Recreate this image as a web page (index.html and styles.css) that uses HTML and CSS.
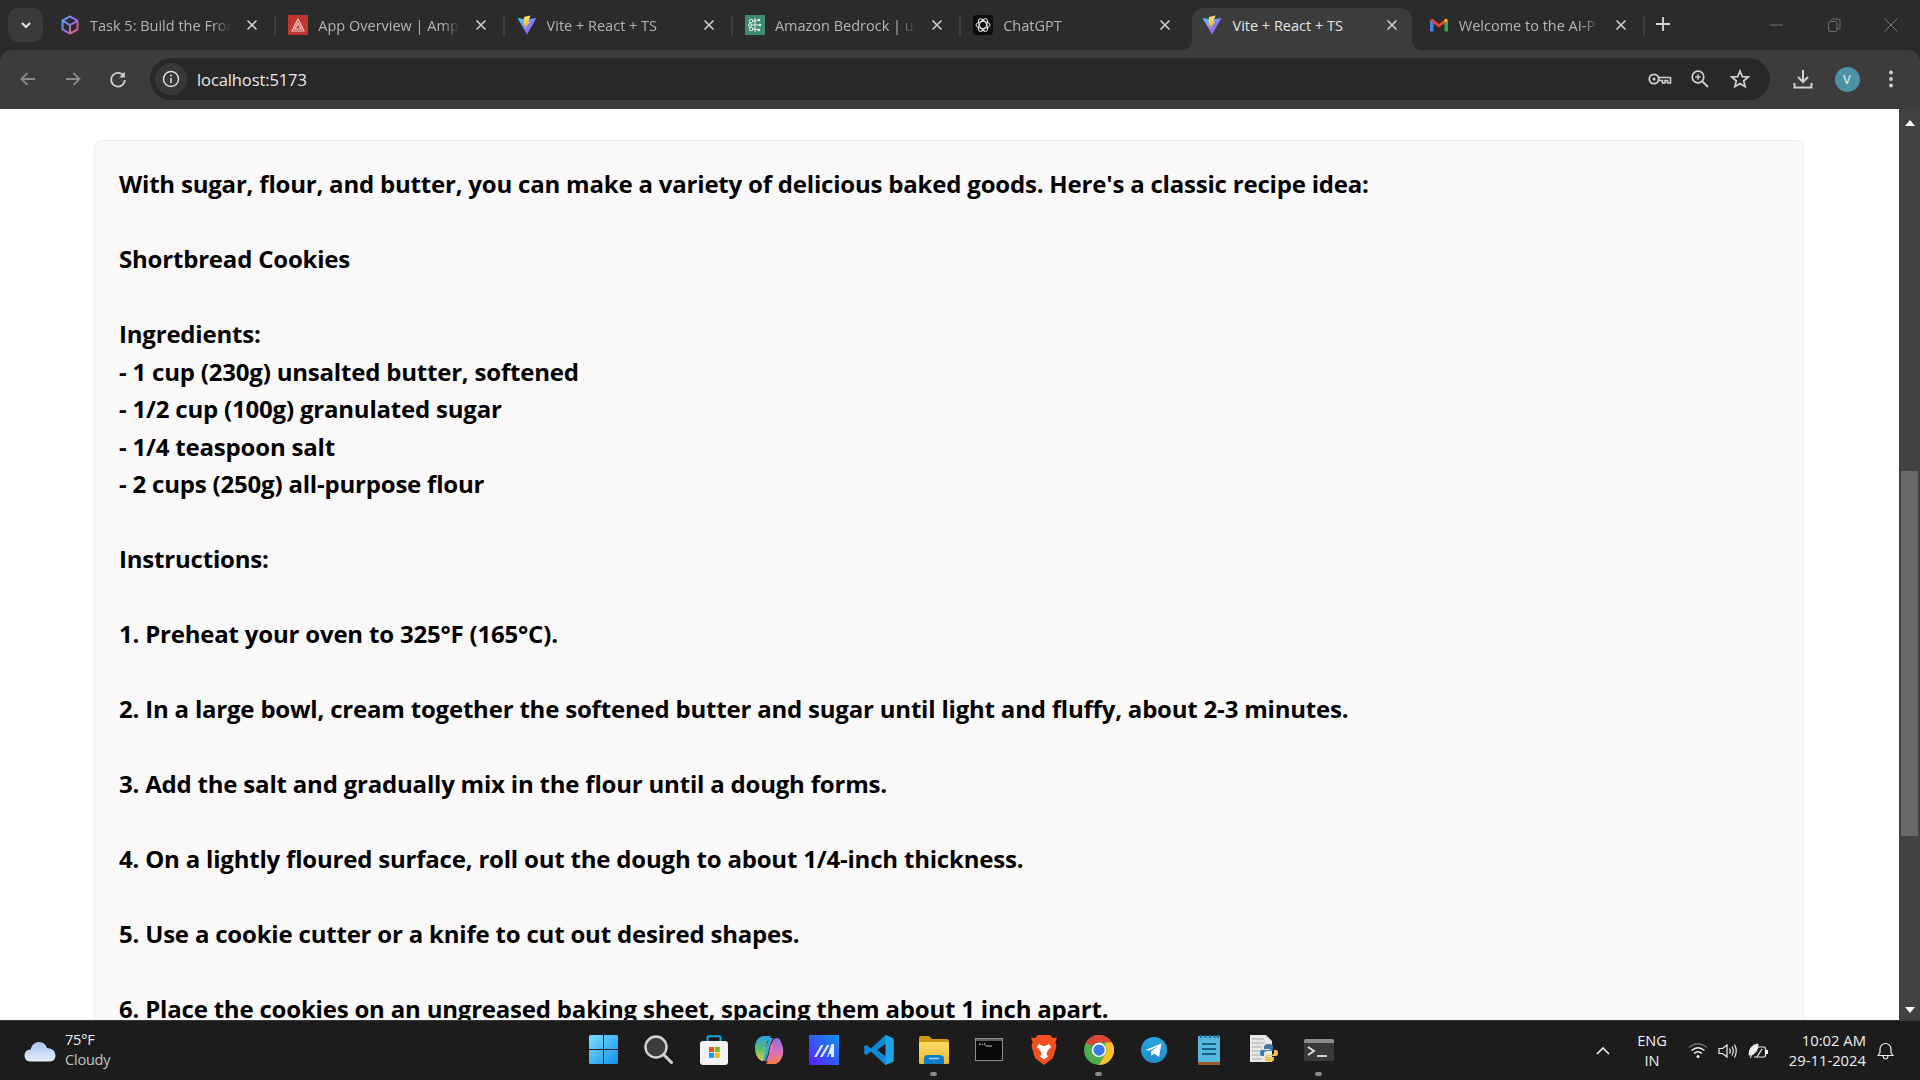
FILE: index.html
```html
<!DOCTYPE html>
<html lang="en">
<head>
<meta charset="utf-8">
<title>Vite + React + TS</title>
<link rel="stylesheet" href="styles.css">
</head>
<body>
<svg class="defs" width="0" height="0" aria-hidden="true">
  <defs>
    <linearGradient id="viteA" x1="0" y1="0" x2="1" y2="1"><stop offset="0" stop-color="#41d1ff"/><stop offset="1" stop-color="#bd34fe"/></linearGradient>
    <linearGradient id="viteB" x1="0" y1="0" x2="0" y2="1"><stop offset="0" stop-color="#ffea83"/><stop offset="1" stop-color="#ffa800"/></linearGradient>
    <linearGradient id="cube" x1="0" y1="0" x2="1" y2="1"><stop offset="0" stop-color="#45b4f5"/><stop offset=".5" stop-color="#9a6af0"/><stop offset="1" stop-color="#f0605a"/></linearGradient>
    <linearGradient id="win" x1="0" y1="0" x2="1" y2="1"><stop offset="0" stop-color="#7fdcfb"/><stop offset="1" stop-color="#0f93ee"/></linearGradient>
    <linearGradient id="ma" x1="1" y1="0" x2="0" y2="1"><stop offset="0" stop-color="#0c96ee"/><stop offset="1" stop-color="#5a1dfb"/></linearGradient>
    <linearGradient id="cp1" x1="0" y1="0" x2="0" y2="1"><stop offset="0" stop-color="#2a9fe8"/><stop offset=".55" stop-color="#5ec26a"/><stop offset="1" stop-color="#f5c33b"/></linearGradient>
    <linearGradient id="cp2" x1="0" y1="0" x2="0" y2="1"><stop offset="0" stop-color="#8f6be8"/><stop offset=".55" stop-color="#d96fc0"/><stop offset="1" stop-color="#f9803f"/></linearGradient>
    <linearGradient id="cloud" x1="0" y1="0" x2="0" y2="1"><stop offset="0" stop-color="#a9c6f5"/><stop offset="1" stop-color="#e2ecfb"/></linearGradient>
    <linearGradient id="tg" x1="0" y1="0" x2="0" y2="1"><stop offset="0" stop-color="#2aa6e0"/><stop offset="1" stop-color="#1d8ccb"/></linearGradient>
    <linearGradient id="fold" x1="0" y1="0" x2="0" y2="1"><stop offset="0" stop-color="#fcdc6a"/><stop offset="1" stop-color="#f1b92c"/></linearGradient>
    <symbol id="vite" viewBox="0 0 20 20">
      <path d="M.5 3 9.6 4.6 19.5 3 10 19.5z" fill="url(#viteA)"/>
      <path d="M13.6.6 7 2l-.5 8.5 2-.4-.5 3.6 5.2-7.2-2.2.4z" fill="url(#viteB)"/>
    </symbol>
    <symbol id="x" viewBox="0 0 12 12">
      <path d="M1.5 1.5 10.5 10.5M10.5 1.5 1.5 10.5" fill="none" stroke="currentColor" stroke-width="1.6"/>
    </symbol>
  </defs>
</svg>

<div class="window">
  <header class="tabstrip">
    <button class="tabmenu" type="button" aria-label="Search tabs">
      <svg width="12" height="12" viewBox="0 0 12 12"><path d="M2 4 6 8 10 4" fill="none" stroke="#e6e6e6" stroke-width="2"/></svg>
    </button>

    <div class="tab">
      <svg class="fav" width="20" height="20" viewBox="0 0 20 20"><path d="M10 1.5 17.5 5.7V14.3L10 18.5 2.500 14.3V5.700ZM2.800 5.900 10 10 17.200 5.900M10 10V18" fill="none" stroke="url(#cube)" stroke-width="2"/></svg>
      <span class="title">Task 5: Build the Fron</span>
      <svg class="close" width="12" height="12"><use href="#x"/></svg>
    </div>
    <div class="tab">
      <svg class="fav" width="20" height="20" viewBox="0 0 20 20"><rect width="20" height="20" fill="#c4352f"/><path d="M10 4 16 16H4ZM10 8 13 14H7Z" fill="none" stroke="#f5c9c5" stroke-width="1.200"/></svg>
      <span class="title">App Overview | Ampl</span>
      <svg class="close" width="12" height="12"><use href="#x"/></svg>
    </div>
    <div class="tab">
      <svg class="fav" width="20" height="20"><use href="#vite"/></svg>
      <span class="title">Vite + React + TS</span>
      <svg class="close" width="12" height="12"><use href="#x"/></svg>
    </div>
    <div class="tab">
      <svg class="fav" width="20" height="20" viewBox="0 0 20 20"><rect width="20" height="20" fill="#3f8a72"/><path d="M10 3V17M10 6H7M10 10H6M10 14H7M10 6.500 13.500 5M10 10H14M10 14 13.500 15" fill="none" stroke="#e4f2ec" stroke-width="1"/><circle cx="6" cy="6" r="1.800" fill="none" stroke="#e4f2ec"/><circle cx="5" cy="10" r="1.500" fill="none" stroke="#e4f2ec"/><circle cx="6" cy="14" r="1.800" fill="none" stroke="#e4f2ec"/><circle cx="15" cy="10" r="1.300" fill="#e4f2ec"/><circle cx="14" cy="5" r="1.300" fill="#e4f2ec"/><circle cx="14" cy="15" r="1.300" fill="#e4f2ec"/></svg>
      <span class="title">Amazon Bedrock | us</span>
      <svg class="close" width="12" height="12"><use href="#x"/></svg>
    </div>
    <div class="tab tab-nosep">
      <svg class="fav" width="20" height="20" viewBox="0 0 20 20"><rect width="20" height="20" rx="4" fill="#0b0b0b"/><g fill="none" stroke="#e8e8e8" stroke-width="1"><ellipse cx="10" cy="10" rx="7" ry="3.500"/><ellipse cx="10" cy="10" rx="7" ry="3.500" transform="rotate(60 10 10)"/><ellipse cx="10" cy="10" rx="7" ry="3.500" transform="rotate(120 10 10)"/></g></svg>
      <span class="title">ChatGPT</span>
      <svg class="close" width="12" height="12"><use href="#x"/></svg>
    </div>
    <div class="tab tab-active">
      <svg class="fav" width="20" height="20"><use href="#vite"/></svg>
      <span class="title">Vite + React + TS</span>
      <svg class="close" width="12" height="12"><use href="#x"/></svg>
    </div>
    <div class="tab">
      <svg class="fav" width="20" height="20" viewBox="0 0 20 20"><path d="M1 5V16.500H4.500V8Z" fill="#4285f4"/><path d="M19 5V16.500H15.500V8Z" fill="#34a853"/><path d="M1 5.500 3 3.500 10 9 17 3.500 19 5.500 10 12.500Z" fill="#ea4335"/><path d="M15.500 8 19 5.500 17 3.500 15.500 4.700Z" fill="#fbbc04"/></svg>
      <span class="title">Welcome to the AI-P</span>
      <svg class="close" width="12" height="12"><use href="#x"/></svg>
    </div>

    <button class="newtab" type="button" aria-label="New tab">
      <svg width="14" height="14" viewBox="0 0 14 14"><path d="M7 0V14M0 7H14" stroke="#d6d6d6" stroke-width="1.800"/></svg>
    </button>

    <div class="winctrls">
      <svg width="14" height="14" viewBox="0 0 14 14"><path d="M1 7H14" stroke="#6e6e6e" stroke-width="1"/></svg>
      <svg width="14" height="14" viewBox="0 0 14 14"><rect x="1.500" y="3.500" width="8.500" height="10" rx="1.500" fill="none" stroke="#6e6e6e"/><path d="M4 3.500V2.500Q4 1 5.500 1H11Q13 1 13 3V9.500Q13 11 11 11H10" fill="none" stroke="#6e6e6e"/></svg>
      <svg width="14" height="14" viewBox="0 0 14 14"><path d="M.5 .5 13.500 13.500M13.500 .5 .5 13.500" stroke="#7a7a7a" stroke-width="1"/></svg>
    </div>
  </header>

  <nav class="toolbar">
    <div class="navbtns">
      <svg width="18" height="18" viewBox="0 0 18 18"><path d="M16 9H2.500M8.500 3 2.500 9 8.500 15" fill="none" stroke="#8a8a8a" stroke-width="1.800"/></svg>
      <svg width="18" height="18" viewBox="0 0 18 18"><path d="M2 9H15.500M9.500 3 15.500 9 9.500 15" fill="none" stroke="#8a8a8a" stroke-width="1.800"/></svg>
      <svg width="18" height="18" viewBox="0 0 18 18"><path d="M15 6.500A6.800 6.800 0 1 0 15.800 10" fill="none" stroke="#cfcfcf" stroke-width="1.800"/><path d="M15.800 1.800V7.400H10.200Z" fill="#cfcfcf"/></svg>
    </div>
    <div class="omnibox">
      <span class="infochip">
        <svg width="18" height="18" viewBox="0 0 18 18"><circle cx="9" cy="9" r="7.500" fill="none" stroke="#dcdcdc" stroke-width="1.500"/><path d="M9 8V13" stroke="#dcdcdc" stroke-width="1.600"/><circle cx="9" cy="5.500" r="1" fill="#dcdcdc"/></svg>
      </span>
      <span class="url">localhost:5173</span>
      <span class="omni-actions">
        <svg class="keyicon" width="24" height="14" viewBox="0 0 24 14"><circle cx="6" cy="7" r="4.700" fill="none" stroke="#d0d0d0" stroke-width="1.800"/><circle cx="6" cy="7" r="1.500" fill="#d0d0d0"/><path d="M10.500 5.500H22.500V11H19.500V8.500H17V11H14.500V8.500H10.500" fill="none" stroke="#d0d0d0" stroke-width="1.600"/></svg>
        <svg width="20" height="20" viewBox="0 0 20 20"><circle cx="8" cy="8" r="5.800" fill="none" stroke="#d0d0d0" stroke-width="1.700"/><path d="M12.300 12.300 18 18" stroke="#d0d0d0" stroke-width="1.800"/><path d="M8 5.300V10.700M5.300 8H10.700" stroke="#d0d0d0" stroke-width="1.500"/></svg>
        <svg width="20" height="20" viewBox="0 0 20 20"><path d="M10 2 12.300 7.600 18.300 8 13.700 11.900 15.200 17.800 10 14.600 4.800 17.800 6.300 11.900 1.700 8 7.700 7.600Z" fill="none" stroke="#d0d0d0" stroke-width="1.700"/></svg>
      </span>
    </div>
    <div class="tool-actions">
      <svg width="20" height="20" viewBox="0 0 20 20"><path d="M10 1V12.500M5 8 10 13 15 8" fill="none" stroke="#d0d0d0" stroke-width="2"/><path d="M1.500 14V18.500H18.500V14" fill="none" stroke="#d0d0d0" stroke-width="2"/></svg>
      <span class="avatar">V</span>
      <svg width="4" height="18" viewBox="0 0 4 18"><circle cx="2" cy="2.500" r="1.900" fill="#d0d0d0"/><circle cx="2" cy="9" r="1.900" fill="#d0d0d0"/><circle cx="2" cy="15.500" r="1.900" fill="#d0d0d0"/></svg>
    </div>
  </nav>

  <main class="viewport">
    <div class="page">
      <article class="card">
        <p class="line">With sugar, flour, and butter, you can make a variety of delicious baked goods. Here's a classic recipe idea:</p>
        <p class="line blank"></p>
        <p class="line">Shortbread Cookies</p>
        <p class="line blank"></p>
        <p class="line">Ingredients:</p>
        <p class="line">- 1 cup (230g) unsalted butter, softened</p>
        <p class="line">- 1/2 cup (100g) granulated sugar</p>
        <p class="line">- 1/4 teaspoon salt</p>
        <p class="line">- 2 cups (250g) all-purpose flour</p>
        <p class="line blank"></p>
        <p class="line">Instructions:</p>
        <p class="line blank"></p>
        <p class="line">1. Preheat your oven to 325°F (165°C).</p>
        <p class="line blank"></p>
        <p class="line">2. In a large bowl, cream together the softened butter and sugar until light and fluffy, about 2-3 minutes.</p>
        <p class="line blank"></p>
        <p class="line">3. Add the salt and gradually mix in the flour until a dough forms.</p>
        <p class="line blank"></p>
        <p class="line">4. On a lightly floured surface, roll out the dough to about 1/4-inch thickness.</p>
        <p class="line blank"></p>
        <p class="line">5. Use a cookie cutter or a knife to cut out desired shapes.</p>
        <p class="line blank"></p>
        <p class="line">6. Place the cookies on an ungreased baking sheet, spacing them about 1 inch apart.</p>
      </article>
    </div>
    <div class="scrollbar">
      <svg width="10" height="6" viewBox="0 0 10 6"><path d="M5 0 10 6H0Z" fill="#fff"/></svg>
      <div class="track"><div class="thumb"></div></div>
      <svg width="10" height="6" viewBox="0 0 10 6"><path d="M0 0H10L5 6Z" fill="#fff"/></svg>
    </div>
  </main>

  <footer class="taskbar">
    <div class="weather">
      <svg width="32" height="22" viewBox="0 0 32 22"><path d="M7 21.500Q.5 21.500 .5 15.500 .5 10 6.500 9.500 8.500 2 15 2 21 2 23 8 31.500 8.500 31.500 15.500 31.500 21.500 25 21.500Z" fill="url(#cloud)"/></svg>
      <div class="weather-text"><span class="temp">75°F</span><span class="cond">Cloudy</span></div>
    </div>

    <div class="apps">
      <span class="app"><svg width="29" height="29" viewBox="0 0 29 29"><path d="M0 1.500Q0 0 1.500 0H14V14H0ZM15 0H27.500Q29 0 29 1.500V14H15ZM0 15H14V29H1.500Q0 29 0 27.500ZM15 15H29V27.500Q29 29 27.500 29H15Z" fill="url(#win)"/></svg></span>
      <span class="app"><svg width="29" height="29" viewBox="0 0 29 29"><circle cx="12" cy="12" r="10.500" fill="#3c3c3c" stroke="#d2d2d2" stroke-width="2.400"/><path d="M20 20 27.500 27.500" stroke="#d2d2d2" stroke-width="3" stroke-linecap="round"/></svg></span>
      <span class="app"><svg width="30" height="30" viewBox="0 0 30 30"><path d="M8.500 7V3Q8.500 1.200 10 1.200H20Q21.500 1.200 21.500 3V7" fill="none" stroke="#1ba2e8" stroke-width="2"/><rect x="1" y="6" width="28" height="24" rx="3" fill="#f2f2f2"/><rect x="10" y="12" width="5" height="5" fill="#f25022"/><rect x="15.800" y="12" width="5" height="5" fill="#7fba00"/><rect x="10" y="17.800" width="5" height="5" fill="#00a4ef"/><rect x="15.800" y="17.800" width="5" height="5" fill="#ffb900"/></svg></span>
      <span class="app"><svg width="30" height="30" viewBox="0 0 30 30"><path d="M9 1H17L13 7 11 22Q10 28 6 25 1 21 1 13 1 3 9 1Z" fill="url(#cp1)"/><path d="M20 4Q25 1 27 7 30 13 29 19 27 28 21 29H12L16 24 18 8Q18.500 5 20 4Z" fill="url(#cp2)"/><path d="M15 3H19L16 10 14 19 11 27 9.500 24 12 12Z" fill="#3aa3d8"/><path d="M16.500 10 20 6 18.500 17 15.500 26 12 27 14.500 20Z" fill="#e9739f"/></svg></span>
      <span class="app"><svg width="30" height="30" viewBox="0 0 30 30"><rect width="30" height="30" fill="url(#ma)"/><path d="M5 22 12 10H14.500L7.500 22ZM11 22 18 10H20.500L13.500 22ZM18 22 22.500 9H25V22H22V19H20L19 22Z" fill="#e8ecff"/></svg></span>
      <span class="app"><svg width="30" height="30" viewBox="0 0 30 30"><path d="M21.500 0 29.500 3.500V26.500L21.500 30 7 16.500 2.500 20 .2 18.800V11.200L2.500 10 7 13.500ZM22 8.500 13 15 22 21.500Z" fill="#0e8ad8"/><path d="M21.500 0 29.500 3.500V26.500L21.500 30Z" fill="#1ea4ea"/></svg></span>
      <span class="app">
        <svg width="30" height="28" viewBox="0 0 30 28"><path d="M0 2Q0 0 2 0H10L13 3H28Q30 3 30 5V8H0Z" fill="#d29a14"/><rect y="6" width="30" height="22" rx="1.500" fill="url(#fold)"/><path d="M5 28V23Q5 19 9 19H21Q25 19 25 23V28Z" fill="#0f7fcc"/><path d="M10 22.500H20" stroke="#9fd3f5" stroke-width="1.500"/></svg>
        <i class="running"></i>
      </span>
      <span class="app"><svg width="28" height="23" viewBox="0 0 28 23"><rect x=".5" y=".5" width="27" height="22" fill="#0a0a0a" stroke="#8c8c8c"/><rect x="1" y="1" width="26" height="2" fill="#5c5c5c"/><path d="M4 6H6M7 6.500H8M9 5 10.500 7.500M11 8H17" stroke="#cfcfcf"/></svg></span>
      <span class="app"><svg width="26" height="30" viewBox="0 0 26 30"><path d="M7 0H19L22 3 26 2.500 24.500 7 25.500 11 22 23 17 27 13 30 9 27 4 23 .5 11 1.500 7 0 2.500 4 3Z" fill="#f1511e"/><path d="M8 9 12 11H14L18 9 20 12 16.500 16 15.500 19 17 21.500 13 24.500 9 21.500 10.500 19 9.500 16 6 12Z" fill="#fff"/></svg></span>
      <span class="app">
        <svg width="30" height="30" viewBox="0 0 48 48"><circle cx="24" cy="24" r="24" fill="#4caf50"/><path d="M24 0A24 24 0 0 1 44.800 12H24A12 12 0 0 0 13.600 18L3.200 12A24 24 0 0 1 24 0Z" fill="#db4437"/><path d="M44.800 12A24 24 0 0 1 24 48L34.400 30A12 12 0 0 0 34.400 18L34.400 12Z" fill="#fbc02d"/><circle cx="24" cy="24" r="11.500" fill="#fff"/><circle cx="24" cy="24" r="9" fill="#3b78e7"/></svg>
        <i class="running"></i>
      </span>
      <span class="app"><svg width="26" height="26" viewBox="0 0 26 26"><circle cx="13" cy="13" r="13" fill="url(#tg)"/><path d="M4.500 13 20.500 6.500 18 20 13 16.500 10.500 19 10 14.500 17.500 9 8 13.800Z" fill="#fff"/></svg></span>
      <span class="app"><svg width="22" height="30" viewBox="0 0 22 30"><rect y="1" width="22" height="28" fill="#56b8de"/><rect y="27" width="22" height="3" fill="#9a5a2a"/><path d="M3 0V3M7.500 0V3M12 0V3M16.500 0V3M20 0V3" stroke="#1d6f93" stroke-width="2"/><path d="M4 9H18M4 14H18M4 19H18" stroke="#17607f" stroke-width="2"/></svg></span>
      <span class="app"><svg width="28" height="29" viewBox="0 0 28 29"><path d="M0 0H16L22 6V27H0Z" fill="#e8e8e8"/><path d="M2 4H14M2 8H14M2 12H12M2 16H12M2 20H12M2 24H12" stroke="#a8a8a8"/><path d="M19 9Q14 9 14 12V14H20V15H12Q10 15 10 18 10 21 12 21H14V19Q14 16 17 16H21Q23 16 23 14V12Q23 9 19 9Z" fill="#3f79ab"/><path d="M19 27Q24 27 24 24V22H18V21H26Q28 21 28 18 28 15 26 15H24V17Q24 20 21 20H17Q15 20 15 22V24Q15 27 19 27Z" fill="#f2c94c"/></svg></span>
      <span class="app">
        <svg width="30" height="22" viewBox="0 0 30 22"><rect width="30" height="22" rx="2" fill="#3a3a3a"/><path d="M0 2Q0 0 2 0H28Q30 0 30 2V4H0Z" fill="#8c8c8c"/><path d="M4 8 10 12 4 16" fill="none" stroke="#e6e6e6" stroke-width="1.800"/><path d="M13 17H23" stroke="#e6e6e6" stroke-width="1.800"/></svg>
        <i class="running"></i>
      </span>
    </div>

    <div class="tray">
      <svg width="14" height="8" viewBox="0 0 14 8"><path d="M1 7 7 1 13 7" fill="none" stroke="#f0f0f0" stroke-width="1.600"/></svg>
      <div class="lang"><span>ENG</span><span>IN</span></div>
      <div class="status">
        <svg width="20" height="18" viewBox="0 0 20 18"><path d="M1 5.500Q10 -2 19 5.500" fill="none" stroke="#6a6a6a" stroke-width="1.300"/><path d="M3.500 8.500Q10 3 16.500 8.500M6 11.500Q10 8 14 11.500" fill="none" stroke="#f0f0f0" stroke-width="1.300"/><circle cx="10" cy="14.500" r="1.500" fill="#f0f0f0"/></svg>
        <svg width="20" height="18" viewBox="0 0 20 18"><path d="M1 6.500H4.500L9 3V15L4.500 11.500H1Z" fill="none" stroke="#f0f0f0" stroke-width="1.200"/><path d="M11.500 6.500Q13 9 11.500 11.500M14 4.500Q16.500 9 14 13.500M16.500 2.500Q20 9 16.500 15.500" fill="none" stroke="#f0f0f0" stroke-width="1.200"/></svg>
        <svg width="20" height="18" viewBox="0 0 20 18"><path d="M8 5H16Q17.500 5 17.500 6.500V13.500Q17.500 15 16 15H6" fill="none" stroke="#f0f0f0" stroke-width="1.200"/><path d="M1 13Q1 3 10 2 10 11 3 13ZM2 16 7 8" fill="#f0f0f0" stroke="#f0f0f0"/><path d="M9 15 14 7" stroke="#f0f0f0" stroke-width="1.200"/><rect x="18" y="8" width="2" height="4" fill="#f0f0f0"/></svg>
      </div>
      <div class="clock"><span>10:02 AM</span><span>29-11-2024</span></div>
      <svg class="bell" width="17" height="18" viewBox="0 0 17 18"><path d="M1 13.500H16L14 10.500V7A5.500 5.500 0 0 0 3 7V10.500ZM6 14Q6.500 17 8.500 17 10.500 17 11 14" fill="none" stroke="#f0f0f0" stroke-width="1.200"/></svg>
    </div>
  </footer>
</div>
</body>
</html>
```

FILE: styles.css
```css
* { box-sizing: border-box; }
html, body { margin: 0; height: 100%; overflow: hidden; }
body { font-family: "Open Sans", "Noto Sans", sans-serif; background: #fff; }
p { margin: 0; }
button { border: 0; padding: 0; background: none; font: inherit; }
svg { display: block; flex: none; }
.defs { position: absolute; }

.window { display: flex; flex-direction: column; height: 100vh; background: #2b2b2b; }

/* tab strip */
.tabstrip { height: 50px; flex: none; display: flex; align-items: flex-end; padding-left: 8px; background: #2b2b2b; color: #b4b4b4; }
.tabmenu { width: 35px; height: 34px; margin-bottom: 8px; margin-right: 2px; border-radius: 10px; background: #3a3a3a; display: flex; align-items: center; justify-content: center; flex: none; }
.tab { position: relative; width: 228.300px; height: 42px; flex: none; display: flex; align-items: center; padding: 0 15px 8px 15px; font-size: 14.500px; }
.tab::after { content: ""; position: absolute; right: -3px; top: 8px; width: 2px; height: 20px; background: #3d3d3d; }
.tab-nosep::after { display: none; }
.fav { margin-right: 10px; }
.title { flex: 1; min-width: 0; white-space: nowrap; overflow: hidden; -webkit-mask-image: linear-gradient(to right, #000 84%, transparent 96%); mask-image: linear-gradient(to right, #000 84%, transparent 96%); }
.close { margin-left: 9px; color: #cfcfcf; }
.tab-active { background: #3c3c3c; color: #e4e4e4; margin: 0 6px; width: 219.300px; border-radius: 12px 12px 0 0; padding-left: 10px; padding-right: 14px; }
.tab-active .title { -webkit-mask-image: none; mask-image: none; }
.tab-active::before, .tab-active::after { content: ""; position: absolute; bottom: 0; top: auto; width: 10px; height: 10px; }
.tab-active::before { left: -10px; background: radial-gradient(circle at 0 0, transparent 10px, #3c3c3c 10.500px); }
.tab-active::after { right: -10px; background: radial-gradient(circle at 100% 0, transparent 10px, #3c3c3c 10.500px); }
.tab-active + .tab { margin-left: -4px; }
.newtab { width: 16px; height: 16px; margin: 0 0 18px 12.500px; display: flex; align-items: center; justify-content: center; flex: none; }
.winctrls { margin-left: auto; display: flex; gap: 43.500px; padding-right: 22px; margin-bottom: 18px; }

/* toolbar */
.toolbar { height: 59px; flex: none; display: flex; align-items: center; padding: 0 0 1px 19px; background: #3c3c3c; border-radius: 12px 12px 0 0; }
.navbtns { display: flex; gap: 27px; width: 131px; }
.omnibox { width: 1620px; height: 42px; flex: none; display: flex; align-items: center; padding: 0 20px 0 5px; border-radius: 21px; background: #282828; }
.infochip { width: 32px; height: 32px; border-radius: 50%; background: #383838; display: flex; align-items: center; justify-content: center; flex: none; }
.url { margin-left: 10px; flex: 1; font-size: 16.500px; letter-spacing: -.1px; color: #e8e8e8; }
.omni-actions { display: flex; align-items: center; gap: 20px; }
.keyicon { margin-right: -2px; }
.tool-actions { flex: 1; display: flex; align-items: center; padding-left: 23px; }
.avatar { width: 25px; height: 25px; margin: 0 29.500px 0 21.500px; border-radius: 50%; background: #4a93a8; color: #e8f4f7; font-size: 13px; display: flex; align-items: center; justify-content: center; }

/* page */
.viewport { flex: 1; min-height: 0; display: flex; overflow: hidden; background: #fff; }
.page { flex: 1; min-width: 0; padding: 31px 95px 0 94px; overflow: hidden; }
.card { background: #faf8f9; border: 1px solid #efeeee; border-radius: 8px; padding: 24px 24px; }
.line { font-weight: 700; font-size: 24px; letter-spacing: -.2px; line-height: 37.500px; height: 37.500px; color: #000; white-space: nowrap; }

.scrollbar { width: 21px; flex: none; background: #424242; display: flex; flex-direction: column; align-items: center; padding: 11px 0 7px; }
.track { flex: 1; width: 100%; padding: 345px 2px 0; }
.thumb { height: 365px; background: #686868; }

/* taskbar */
.taskbar { height: 60px; flex: none; display: grid; grid-template-columns: 1fr auto 1fr; align-items: center; background: #1c1c1c; border-top: 1px solid #3a3a3a; color: #f0f0f0; }
.weather { display: flex; align-items: center; gap: 9px; padding-left: 24px; }
.weather-text { display: flex; flex-direction: column; padding-bottom: 2px; line-height: 20px; font-size: 14.500px; letter-spacing: -.2px; }
.temp { color: #f2f2f2; }
.cond { color: #c4c4c4; }
.apps { display: flex; align-items: center; padding-left: 2px; }
.app { position: relative; width: 55px; height: 59px; padding-bottom: 2px; display: flex; align-items: center; justify-content: center; }
.running { position: absolute; left: 24px; bottom: 4px; width: 7px; height: 4px; border-radius: 2px; background: #8a8a8a; }
.tray { display: flex; align-items: center; justify-content: flex-end; padding-right: 26px; }
.lang { margin-left: 19px; width: 46px; display: flex; flex-direction: column; align-items: center; line-height: 20px; font-size: 14.500px; }
.status { margin-left: 13px; display: flex; align-items: center; gap: 10px; }
.clock { width: 116px; display: flex; flex-direction: column; align-items: flex-end; padding-bottom: 2px; line-height: 20px; font-size: 14.800px; margin-left: -18px; }
.bell { margin-left: 11px; }
```
